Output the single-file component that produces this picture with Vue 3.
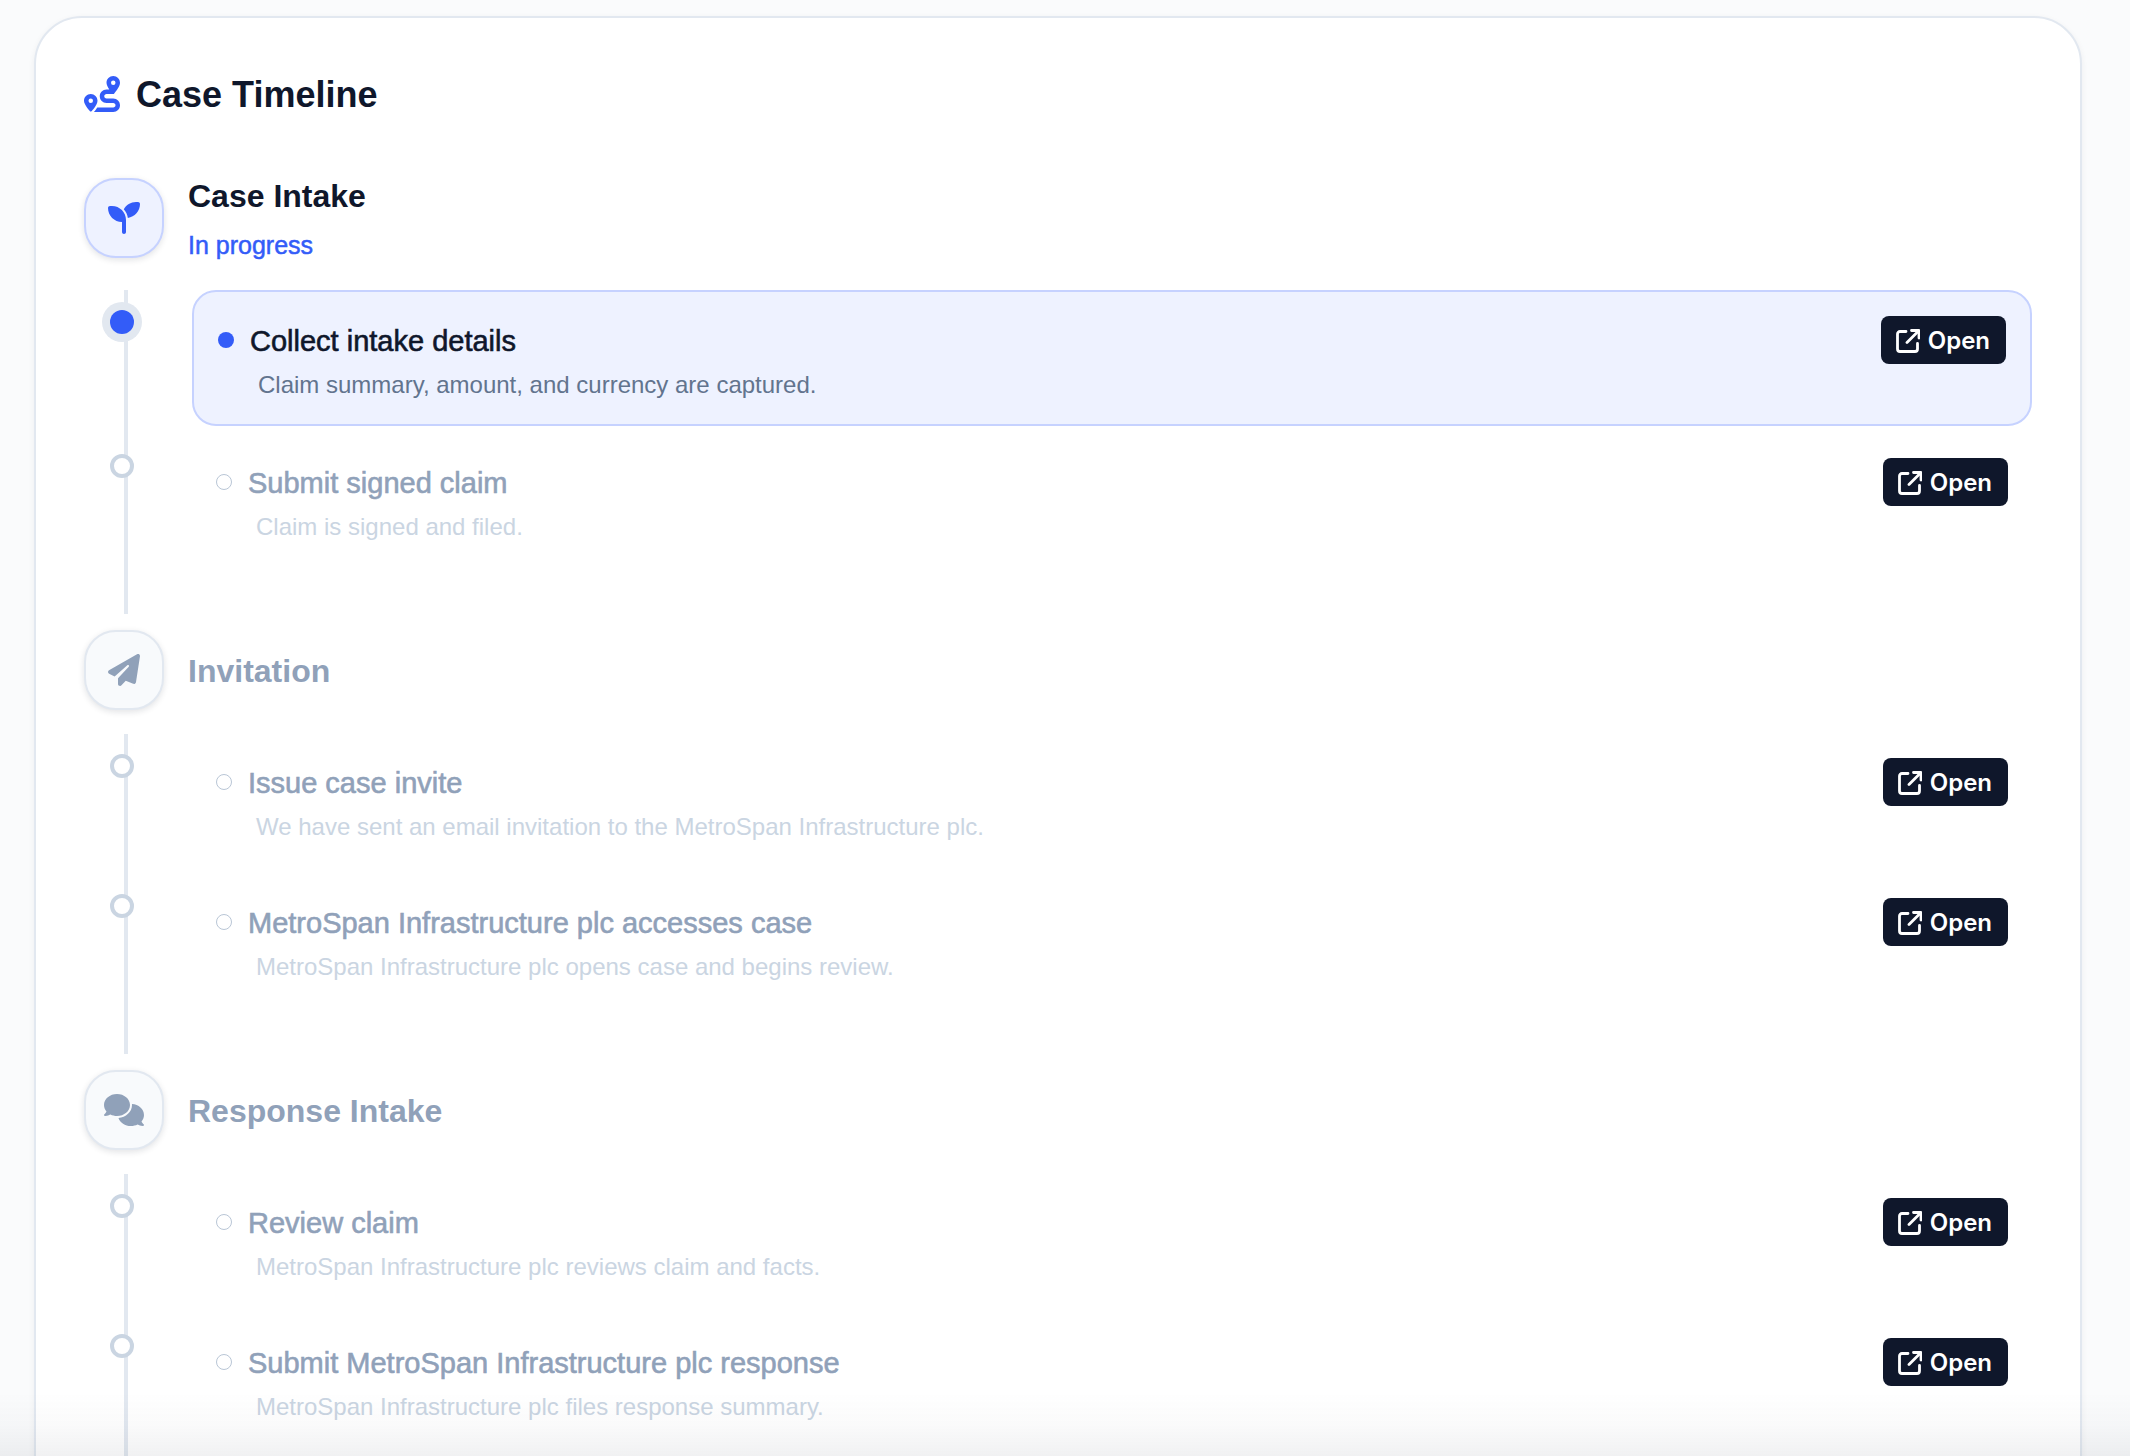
<template>
  <main class="page">
    <section class="card" aria-labelledby="timeline-title">
      <h1 id="timeline-title" class="card-title">
        <svg class="card-title-icon" viewBox="0 0 512 512" aria-hidden="true">
          <path :d="icons.route" />
        </svg>
        <span>Case Timeline</span>
      </h1>

      <div
        v-for="stage in stages"
        :key="stage.title"
        class="stage"
        :class="{ active: stage.status }"
      >
        <header class="stage-header">
          <div class="stage-badge">
            <svg :viewBox="stage.viewBox" aria-hidden="true">
              <path :d="icons[stage.icon]" />
            </svg>
          </div>
          <div class="stage-heading">
            <h2 class="stage-title">{{ stage.title }}</h2>
            <p v-if="stage.status" class="stage-status">{{ stage.status }}</p>
          </div>
        </header>

        <ol class="steps">
          <li
            v-for="step in stage.steps"
            :key="step.title"
            class="step"
            :class="{ current: step.current }"
          >
            <span class="step-marker"></span>
            <div class="step-row">
              <span class="step-bullet"></span>
              <h3 class="step-title">{{ step.title }}</h3>
              <button type="button" class="open-button" @click="openStep(step)">
                <svg viewBox="0 0 24 24" aria-hidden="true">
                  <path d="M10 2.5H4A2.5 2.5 0 0 0 1.500 5V20A2.500 2.500 0 0 0 4 22.500H19A2.500 2.500 0 0 0 21.500 20V14.500" />
                  <path d="M15.500 1.500H23V9" />
                  <path d="M22.500 2L11 13.500" />
                </svg>
                <span>Open</span>
              </button>
            </div>
            <p class="step-description">{{ step.description }}</p>
          </li>
        </ol>
      </div>
    </section>
  </main>
</template>

<script setup>
import { ref } from 'vue'

const icons = {
  route: 'M512 96c0 50.2-59.1 125.1-84.6 155c-3.8 4.4-9.4 6.1-14.5 5L320 256c-17.7 0-32 14.3-32 32s14.3 32 32 32l96 0c53 0 96 43 96 96s-43 96-96 96l-276.4 0c8.7-9.9 19.3-22.6 30-36.8c6.3-8.4 12.8-17.6 19-27.2L416 448c17.7 0 32-14.3 32-32s-14.3-32-32-32l-96 0c-53 0-96-43-96-96s43-96 96-96l39.8 0c-21-31.5-39.8-67.7-39.8-96c0-53 43-96 96-96s96 43 96 96zM117.1 489.1c-3.8 4.3-7.2 8.1-10.1 11.3l-1.8 2-.2-.2c-6 4.6-14.6 4-20-1.8C59.8 473 0 402.5 0 352c0-53 43-96 96-96s96 43 96 96c0 30-21.1 67-43.5 97.9c-10.7 14.7-21.7 28-30.8 38.5l-.6 .7zM128 352a32 32 0 1 0 -64 0 32 32 0 1 0 64 0zM416 128a32 32 0 1 0 0-64 32 32 0 1 0 0 64z',
  seedling: 'M512 32c0 113.6-84.6 207.5-194.2 222c-7.1-53.4-30.6-101.6-65.3-139.3C290.8 46.3 364 0 448 0l32 0c17.7 0 32 14.3 32 32zM0 96C0 78.3 14.3 64 32 64l32 0c123.7 0 224 100.3 224 224l0 32 0 160c0 17.7-14.3 32-32 32s-32-14.3-32-32l0-160C100.3 320 0 219.7 0 96z',
  plane: 'M498.1 5.6c10.1 7 15.4 19.1 13.5 31.2l-64 416c-1.5 9.7-7.4 18.2-16 23s-18.9 5.4-28 1.6L284 427.7l-68.5 74.1c-8.9 9.7-22.9 12.9-35.2 8.1S160 493.2 160 480V396.4c0-4 1.5-7.8 4.2-10.7L331.8 202.8c5.8-6.3 5.6-16-.4-22s-15.7-6.4-22-.7L106 360.8 17.7 316.6C7.1 311.3 .3 300.7 0 288.9s5.9-22.8 16.1-28.7l448-256c10.7-6.1 23.9-5.5 34 1.4z',
  comments: 'M208 352c114.9 0 208-78.8 208-176S322.9 0 208 0S0 78.8 0 176c0 38.6 14.7 74.3 39.6 103.4c-3.5 9.4-8.7 17.7-14.2 24.7c-4.8 6.2-9.7 11-13.3 14.3c-1.8 1.6-3.3 2.9-4.3 3.7c-.5 .4-.9 .7-1.1 .8l-.2 .2C1 327.2-1.4 334.4 .8 340.9S9.1 352 16 352c21.8 0 43.8-5.6 62.1-12.5c9.2-3.5 17.8-7.4 25.2-11.4C134.1 343.3 169.8 352 208 352zM448 176c0 112.3-99.1 196.9-216.5 207C255.8 457.4 336.4 512 432 512c38.2 0 73.9-8.7 104.7-23.9c7.5 4 16 7.9 25.2 11.4c18.3 6.9 40.3 12.5 62.1 12.5c6.9 0 13.1-4.5 15.2-11.1c2.1-6.6-.2-13.8-5.8-17.9l-.2-.2c-.2-.2-.6-.4-1.1-.8c-1-.8-2.5-2-4.3-3.7c-3.6-3.3-8.5-8.1-13.3-14.3c-5.5-7-10.7-15.4-14.2-24.7c24.9-29 39.6-64.7 39.6-103.4c0-92.8-84.9-168.9-192.6-175.5c.4 5.1 .6 10.3 .6 15.5z'
}

const stages = [
  {
    title: 'Case Intake',
    status: 'In progress',
    icon: 'seedling',
    viewBox: '0 0 512 512',
    steps: [
      {
        title: 'Collect intake details',
        description: 'Claim summary, amount, and currency are captured.',
        current: true
      },
      {
        title: 'Submit signed claim',
        description: 'Claim is signed and filed.'
      }
    ]
  },
  {
    title: 'Invitation',
    icon: 'plane',
    viewBox: '0 0 512 512',
    steps: [
      {
        title: 'Issue case invite',
        description: 'We have sent an email invitation to the MetroSpan Infrastructure plc.'
      },
      {
        title: 'MetroSpan Infrastructure plc accesses case',
        description: 'MetroSpan Infrastructure plc opens case and begins review.'
      }
    ]
  },
  {
    title: 'Response Intake',
    icon: 'comments',
    viewBox: '0 0 640 512',
    steps: [
      {
        title: 'Review claim',
        description: 'MetroSpan Infrastructure plc reviews claim and facts.'
      },
      {
        title: 'Submit MetroSpan Infrastructure plc response',
        description: 'MetroSpan Infrastructure plc files response summary.'
      }
    ]
  }
]

const openedStep = ref(null)

function openStep(step) {
  openedStep.value = step
}
</script>

<style>
body {
  margin: 0;
  background: #fafbfc;
}
</style>

<style scoped>
.page {
  box-sizing: border-box;
  height: 100vh;
  padding: 16px 48px 0 34px;
  overflow: hidden;
  font-family: "Helvetica Neue", "Liberation Sans", Arial, sans-serif;
  color: #0f172b;
}

/* Soft shade along the bottom of the window */
.page::after {
  content: "";
  position: fixed;
  right: 0;
  bottom: 0;
  left: 0;
  height: 64px;
  background: linear-gradient(to bottom, rgba(15, 23, 43, 0), rgba(15, 23, 43, 0.02) 50%, rgba(15, 23, 43, 0.06));
  pointer-events: none;
}

h1,
h2,
h3,
p,
ol {
  margin: 0;
  padding: 0;
}

.card {
  padding: 48px;
  background: #fff;
  border: 2px solid #e2e8f0;
  border-radius: 48px;
  box-shadow: 0 2px 6px rgba(15, 23, 43, 0.06);
}

.card-title {
  display: flex;
  align-items: center;
  gap: 16px;
  margin-bottom: 56px;
  font-size: 36px;
  font-weight: 700;
  line-height: 56px;
}

.card-title span {
  padding-top: 2px;
  line-height: 54px;
}

.card-title-icon {
  width: 36px;
  height: 36px;
  fill: #335cf8;
}

.stage + .stage {
  margin-top: 16px;
}

.stage-header {
  display: flex;
  align-items: flex-start;
  gap: 24px;
  margin-bottom: 24px;
}

.stage-badge {
  display: flex;
  align-items: center;
  justify-content: center;
  box-sizing: border-box;
  width: 80px;
  height: 80px;
  flex-shrink: 0;
  background: #f8fafc;
  border: 2px solid #e2e8f0;
  border-radius: 32px;
  box-shadow: 0 2px 6px rgba(15, 23, 43, 0.12);
}

.stage-badge svg {
  height: 32px;
  fill: #90a1b9;
}

.stage-heading {
  display: flex;
  flex-direction: column;
  justify-content: center;
  gap: 12px;
  box-sizing: border-box;
  min-height: 80px;
  padding-top: 2px;
}

.stage-title {
  font-size: 32px;
  font-weight: 700;
  line-height: 32px;
  color: #90a1b9;
}

.stage-status {
  font-size: 25px;
  line-height: 42px;
  color: #335cf8;
  -webkit-text-stroke: 0.5px currentColor;
}

.stage.active .stage-badge {
  background: #eef2ff;
  border-color: #c6d2ff;
}

.stage.active .stage-badge svg {
  fill: #335cf8;
}

.stage.active .stage-title {
  color: #0f172b;
}

.steps {
  display: flex;
  flex-direction: column;
  gap: 8px;
  margin-left: 40px;
  padding: 0 0 48px 64px;
  border-left: 4px solid #e2e8f0;
  list-style: none;
}

.step {
  position: relative;
  padding: 24px;
  border-radius: 24px;
}

/* Marker sits on top of the rail */
.step-marker {
  position: absolute;
  top: 20px;
  left: -82px;
  box-sizing: border-box;
  width: 24px;
  height: 24px;
  background: #fff;
  border: 4px solid #cad5e2;
  border-radius: 50%;
}

.step-row {
  display: flex;
  align-items: center;
  gap: 16px;
}

.step-bullet {
  box-sizing: border-box;
  width: 16px;
  height: 16px;
  flex-shrink: 0;
  border: 1px solid #b9c6d6;
  border-radius: 50%;
}

.step-title {
  flex: 1;
  min-width: 0;
  padding-top: 2px;
  font-size: 29px;
  font-weight: 400;
  line-height: 40px;
  color: #90a1b9;
  -webkit-text-stroke: 0.6px currentColor;
}

.step-description {
  margin-top: 6px;
  padding-left: 40px;
  font-size: 24px;
  line-height: 30px;
  color: #cad5e2;
}

.step.current {
  background: #eef2ff;
  border: 2px solid #c6d2ff;
}

.step.current .step-marker {
  top: 18px;
  left: -84px;
  background: #335cf8;
  border: none;
  box-shadow: 0 0 0 8px #e2e8f0;
}

.step.current .step-bullet {
  background: #335cf8;
  border: none;
}

.step.current .step-title {
  color: #0f172b;
}

.step.current .step-description {
  color: #62748e;
}

.open-button {
  display: flex;
  align-items: center;
  gap: 8px;
  height: 48px;
  padding: 2px 16px 0 15px;
  flex-shrink: 0;
  font-family: Inter, "Liberation Sans", sans-serif;
  font-size: 24px;
  font-weight: 600;
  line-height: 32px;
  color: #fff;
  background: #0f172b;
  border: none;
  border-radius: 8px;
  cursor: pointer;
}

.open-button:hover {
  background: #1d293d;
}

.open-button svg {
  width: 24px;
  height: 24px;
  fill: none;
  stroke: currentColor;
  stroke-width: 2.8;
  stroke-linecap: round;
  stroke-linejoin: round;
}
</style>
